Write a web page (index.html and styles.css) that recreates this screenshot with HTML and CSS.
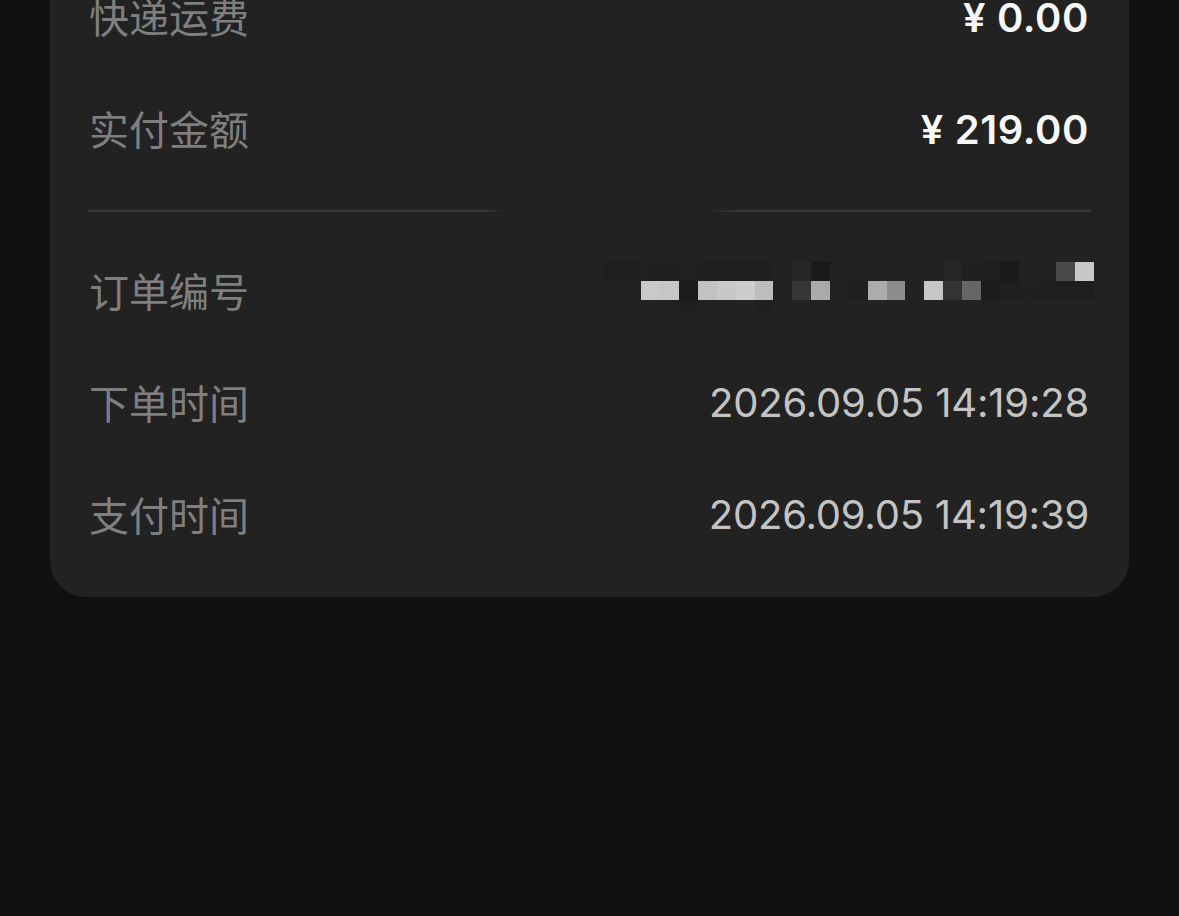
FILE: index.html
```html
<!DOCTYPE html>
<html lang="zh-CN">
<head>
<meta charset="utf-8">
<title>订单详情</title>
<link rel="stylesheet" href="styles.css">
</head>
<body>
<div class="page">
  <div class="card">
    <div class="row">
      <span class="label">快递运费</span>
      <span class="value strong">¥ 0.00</span>
    </div>
    <div class="row">
      <span class="label">实付金额</span>
      <span class="value strong">¥ 219.00</span>
    </div>
    <div class="divider"></div>
    <div class="row">
      <span class="label">订单编号</span>
      <div class="mosaic" aria-label="订单编号已打码">
        <i style="background:#1e1e1e"></i><i style="background:#1e1e1e"></i><i style="background:#202020"></i><i style="background:#202020"></i><i style="background:#212121"></i><i style="background:#1f1f1f"></i><i style="background:#1f1f1f"></i><i style="background:#1e1e1e"></i><i style="background:#1f1f1f"></i><i style="background:#222"></i><i style="background:#262626"></i><i style="background:#191919"></i><i style="background:#222"></i><i style="background:#222"></i><i style="background:#222"></i><i style="background:#222"></i><i style="background:#222"></i><i style="background:#222"></i><i style="background:#262626"></i><i style="background:#202020"></i><i style="background:#1f1f1f"></i><i style="background:#191919"></i><i style="background:#222"></i><i style="background:#222"></i><i style="background:#4a4a4a"></i><i style="background:#c8c8c8"></i>
        <i style="background:#222"></i><i style="background:#222"></i><i style="background:#c9c9c9"></i><i style="background:#c6c6c6"></i><i style="background:#1c1c1c"></i><i style="background:#c2c2c2"></i><i style="background:#c8c8c8"></i><i style="background:#cdcdcd"></i><i style="background:#bdbdbd"></i><i style="background:#222"></i><i style="background:#363636"></i><i style="background:#aaaaaa"></i><i style="background:#212121"></i><i style="background:#1f1f1f"></i><i style="background:#acacac"></i><i style="background:#8c8c8c"></i><i style="background:#222"></i><i style="background:#c6c6c6"></i><i style="background:#333"></i><i style="background:#666"></i><i style="background:#1c1c1c"></i><i style="background:#1f1f1f"></i><i style="background:#202020"></i><i style="background:#1f1f1f"></i><i style="background:#1e1e1e"></i><i style="background:#1e1e1e"></i>
        <i style="background:#222"></i><i style="background:#222"></i><i style="background:#222"></i><i style="background:#222"></i><i style="background:#202020"></i><i style="background:#212121"></i><i style="background:#222"></i><i style="background:#222"></i><i style="background:#202020"></i><i style="background:#222"></i><i style="background:#222"></i><i style="background:#212121"></i><i style="background:#222"></i><i style="background:#222"></i><i style="background:#222"></i><i style="background:#222"></i><i style="background:#222"></i><i style="background:#222"></i><i style="background:#222"></i><i style="background:#222"></i><i style="background:#222"></i><i style="background:#222"></i><i style="background:#222"></i><i style="background:#222"></i><i style="background:#222"></i><i style="background:#222"></i>
      </div>
    </div>
    <div class="row">
      <span class="label">下单时间</span>
      <span class="value">2026.09.05 14:19:28</span>
    </div>
    <div class="row">
      <span class="label">支付时间</span>
      <span class="value">2026.09.05 14:19:39</span>
    </div>
  </div>
</div>
</body>
</html>
```

FILE: styles.css
```css
html, body {
  margin: 0;
  padding: 0;
  background: #111111;
  height: 100%;
  overflow: hidden;
}

.page {
  padding: 0 50px;
}

.card {
  margin-top: -38px;
  background: #222222;
  border-radius: 0 0 36px 36px;
  padding: 0 40px 25px;
}

.row {
  height: 112px;
  display: flex;
  align-items: center;
  justify-content: space-between;
}

.label {
  font-family: "Noto Sans CJK SC", sans-serif;
  font-size: 40px;
  color: #7f7f7f;
  line-height: 1;
  padding-bottom: 5px;
  margin-left: -1px;
}

.value {
  font-family: "Inter", "Noto Sans CJK SC", sans-serif;
  font-size: 40px;
  color: #c4c4c4;
  line-height: 1;
  letter-spacing: -0.2px;
  padding-bottom: 2px;
}

.value.strong {
  color: #f7f7f7;
  font-weight: 600;
  letter-spacing: 0.6px;
  padding-bottom: 0;
}

.divider {
  height: 2px;
  margin: 24px -2px;
  background: linear-gradient(to right,
    #3a3a3a 0%, #3a3a3a 39.3%, rgba(58,58,58,0) 41.5%,
    rgba(58,58,58,0) 61.4%, #3a3a3a 65.3%, #3a3a3a 100%);
}

.mosaic {
  display: grid;
  grid-template-columns: repeat(26, 18.86px);
  grid-auto-rows: 19px;
  margin-right: -5px;
  margin-top: -4px;
}

.mosaic i {
  display: block;
}
```
